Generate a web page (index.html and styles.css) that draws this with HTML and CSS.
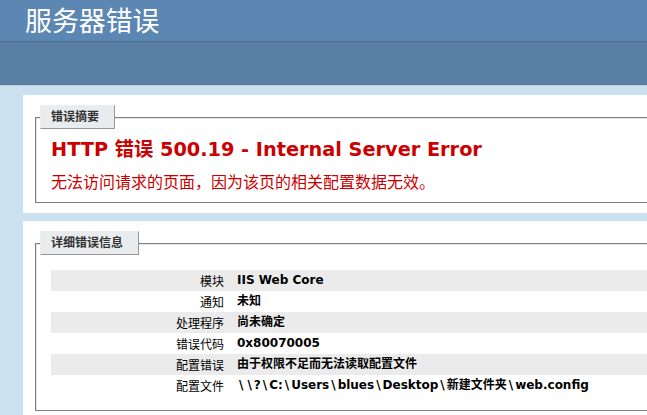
FILE: index.html
```html
<!DOCTYPE html>
<html lang="zh-CN">
<head>
<meta charset="utf-8">
<title>IIS 详细错误 - 500.19 - Internal Server Error</title>
<link rel="stylesheet" href="styles.css">
</head>
<body>
<div class="header"><h1>服务器错误</h1></div>
<div class="server-version"></div>
<div class="content">
  <div class="container">
    <fieldset class="box">
      <legend>错误摘要</legend>
      <h2>HTTP 错误 500.19 - Internal Server Error</h2>
      <h3>无法访问请求的页面，因为该页的相关配置数据无效。</h3>
    </fieldset>
  </div>
  <div class="container">
    <fieldset class="box">
      <legend>详细错误信息</legend>
      <div class="details">
        <div class="row alt"><span class="label">模块</span><span class="value">IIS Web Core</span></div>
        <div class="row"><span class="label">通知</span><span class="value">未知</span></div>
        <div class="row alt"><span class="label">处理程序</span><span class="value">尚未确定</span></div>
        <div class="row"><span class="label">错误代码</span><span class="value">0x80070005</span></div>
        <div class="row alt"><span class="label">配置错误</span><span class="value">由于权限不足而无法读取配置文件</span></div>
        <div class="row"><span class="label">配置文件</span><span class="value"><span class="sep">\</span><span class="sep">\</span>?<span class="sep">\</span>C:<span class="sep">\</span>Users<span class="sep">\</span>blues<span class="sep">\</span>Desktop<span class="sep">\</span>新建文件夹<span class="sep">\</span>web.config</span></div>
      </div>
    </fieldset>
  </div>
</div>
</body>
</html>
```
FILE: styles.css
```css
html, body {
  margin: 0;
  padding: 0;
}
body {
  background: #CBE1EF;
  font-family: Verdana, "DejaVu Sans", "Noto Sans CJK SC", sans-serif;
  font-size: 11.2px;
  width: 647px;
  height: 415px;
  overflow: hidden;
}
.header {
  height: 41px;
  background: #5C87B2;
  padding: 0 0 0 25px;
  box-sizing: border-box;
}
.header h1 {
  margin: 0;
  font-family: "Noto Sans CJK SC", sans-serif;
  font-size: 26.88px;
  font-weight: normal;
  line-height: 40px;
  color: #fff;
}
.server-version {
  height: 43px;
  background: #5A7FA5;
  border-top: 1px solid #4A6C8E;
  border-bottom: 1px solid #C1CFDD;
}
.content {
  padding: 9px 0 0 23px;
}
.container {
  background: #fff;
  width: 700px;
  padding: 10px 12px;
  margin-bottom: 8px;
}
.box {
  margin: 0;
  padding: 0 15px 10px 15px;
  border: 1px solid #808080;
  box-shadow: inset 1px 1px 0 #e2e2e2;
  min-width: 0;
}
.box legend {
  margin: 0 0 0 -11px;
  padding: 4px 15px 4px 10px;
  background: #E9ECEF;
  border-top: 1px solid #EDEDED;
  border-left: 1px solid #EDEDED;
  border-right: 1px solid #979797;
  border-bottom: 1px solid #979797;
  color: #333;
  font-weight: bold;
  font-size: 12px;
  line-height: 14px;
}
.box h2 {
  margin: 10px 0 0 0;
  font-size: 19.3px;
  line-height: 22px;
  font-weight: bold;
  color: #CC0000;
}
.box h3 {
  margin: 10px 0 0 0;
  font-size: 16px;
  line-height: 21px;
  font-weight: normal;
  color: #CC0000;
  font-family: "Noto Sans CJK SC", sans-serif;
}
.details {
  margin: 15px 0 4px 0;
}
.row {
  display: grid;
  grid-template-columns: 173px 1fr;
  column-gap: 13px;
  height: 21px;
  line-height: 21px;
  font-size: 12px;
}
.row.alt {
  background: #EBEBEB;
}
.label {
  text-align: right;
  color: #000;
  font-family: "Noto Sans CJK SC", sans-serif;
}
.value {
  font-weight: bold;
  color: #000;
  white-space: nowrap;
}
.sep {
  padding: 0 2px;
}
```
